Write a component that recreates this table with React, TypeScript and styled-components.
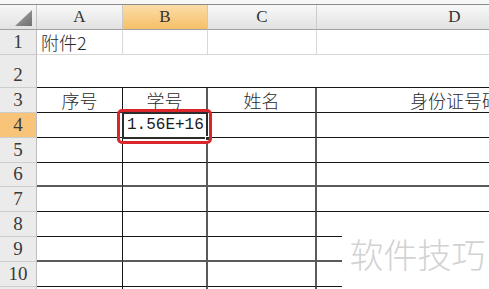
import React from 'react';
import styled, { createGlobalStyle, css } from 'styled-components';

type Line = 'none' | 'light' | 'dark' | 'heavy';

const lineCss = (l: Line) => {
  if (l === 'light') return '1px solid #d8d8d8';
  if (l === 'dark') return '1px solid #161616';
  if (l === 'heavy') return '2px solid #5a5a5a';
  return 'none';
};

const COLS = '37px 86px 85px 109px 276px';

const GlobalStyle = createGlobalStyle`
  html, body {
    margin: 0;
    padding: 0;
    background: #fff;
    overflow: hidden;
  }
  * {
    box-sizing: border-box;
  }
`;

const Sheet = styled.div`
  position: relative;
  width: 489px;
  height: 289px;
  overflow: hidden;
  background: #fff;
`;

const TopStrip = styled.div`
  height: 5px;
  background: #f7f7f7;
  border-bottom: 1px solid #8a8a8a;
`;

const Row = styled.div<{ $h: number }>`
  display: grid;
  grid-template-columns: ${COLS};
  height: ${p => p.$h}px;
`;

const Corner = styled.div`
  background: linear-gradient(#f6f6f6, #e3e3e3);
  border-right: 1px solid #c4c4c4;
  border-bottom: 1px solid #a0a0a0;
  display: flex;
  align-items: flex-end;
  justify-content: flex-end;
  padding: 0 4px 3px 0;
`;

const ColHead = styled.div<{ $active?: boolean }>`
  display: flex;
  align-items: center;
  justify-content: center;
  font-family: 'Liberation Serif', serif;
  font-size: 17px;
  color: #333;
  border-right: 1px solid #cacaca;
  border-bottom: 1px solid #a0a0a0;
  background: ${p =>
    p.$active
      ? 'linear-gradient(#fbdca6, #f6c068)'
      : 'linear-gradient(#f8f8f8, #e2e2e2)'};
`;

const RowHead = styled.div<{ $active?: boolean }>`
  display: flex;
  align-items: flex-end;
  justify-content: center;
  padding-bottom: 1px;
  font-family: 'Liberation Serif', serif;
  font-size: 19px;
  line-height: 22px;
  color: #3a3a3a;
  border-right: 1px solid #bdbdbd;
  border-bottom: 1px solid #cdcdcd;
  background: ${p => (p.$active ? '#f8c47a' : '#ebebeb')};
`;

const Cell = styled.div<{
  $right?: Line;
  $bottom?: Line;
  $align?: 'left' | 'center';
  $span?: number;
}>`
  display: flex;
  align-items: center;
  justify-content: ${p => (p.$align === 'left' ? 'flex-start' : 'center')};
  padding: 0 4px;
  white-space: nowrap;
  overflow: hidden;
  font-family: 'Noto Sans CJK SC', sans-serif;
  font-weight: 300;
  font-size: 18px;
  color: #2a2a2a;
  border-right: ${p => lineCss(p.$right || 'none')};
  border-bottom: ${p => lineCss(p.$bottom || 'none')};
  ${p =>
    p.$span &&
    css`
      grid-column: span ${p.$span};
    `}
`;

const Number = styled.span`
  font-family: 'Liberation Mono', monospace;
  font-size: 16px;
  font-weight: 400;
  color: #1a1a1a;
`;

const Highlight = styled.div`
  position: absolute;
  left: 117px;
  top: 109px;
  width: 95px;
  height: 35px;
  border: 3px solid #d8262b;
  border-radius: 5px;
`;

const ActiveCell = styled.div`
  position: absolute;
  left: 122px;
  top: 112px;
  width: 86px;
  height: 27px;
  border: 2px solid #2b2b2b;
`;

const FillHandle = styled.div`
  position: absolute;
  right: -4px;
  bottom: -4px;
  width: 5px;
  height: 5px;
  background: #2b2b2b;
  border: 1px solid #fff;
`;

const Watermark = styled.div`
  position: absolute;
  left: 342px;
  top: 223px;
  right: 0;
  bottom: 0;
  background: #fff;
  display: flex;
  align-items: center;
  justify-content: center;
  padding: 0 0 6px 4px;
  font-family: 'Noto Sans CJK SC', sans-serif;
  font-weight: 300;
  font-size: 34px;
  color: #d2d2d2;
`;

// rows 5..10, then a sliver of row 11 at the bottom edge
const rowHeights = [25, 24, 25, 25, 25, 25];
const heavyBottoms = [6, 9];

const App: React.FC = () => {
  return (
    <>
      <GlobalStyle />
      <Sheet>
        <TopStrip />
        <Row $h={25}>
          <Corner>
            <svg width="17" height="16" viewBox="0 0 17 16">
              <defs>
                <linearGradient id="tri" x1="0" y1="0" x2="1" y2="1">
                  <stop offset="0" stopColor="#a9a9a9" />
                  <stop offset="1" stopColor="#6f6f6f" />
                </linearGradient>
              </defs>
              <polygon points="17,0 17,16 0,16" fill="url(#tri)" />
            </svg>
          </Corner>
          <ColHead>A</ColHead>
          <ColHead $active>B</ColHead>
          <ColHead>C</ColHead>
          <ColHead>D</ColHead>
        </Row>

        <Row $h={25}>
          <RowHead>1</RowHead>
          <Cell $align="left" $right="light" $bottom="light">
            附件2
          </Cell>
          <Cell $right="light" $bottom="light" />
          <Cell $right="light" $bottom="light" />
          <Cell $bottom="light" />
        </Row>

        <Row $h={33}>
          <RowHead>2</RowHead>
          <Cell $span={4} $bottom="dark" />
        </Row>

        <Row $h={25}>
          <RowHead>3</RowHead>
          <Cell $right="dark" $bottom="dark">序号</Cell>
          <Cell $right="heavy" $bottom="dark">学号</Cell>
          <Cell $right="heavy" $bottom="dark">姓名</Cell>
          <Cell $bottom="dark">身份证号码</Cell>
        </Row>

        <Row $h={25}>
          <RowHead $active>4</RowHead>
          <Cell $right="dark" $bottom="dark" />
          <Cell $align="left" $right="heavy" $bottom="dark">
            <Number>1.56E+16</Number>
          </Cell>
          <Cell $right="heavy" $bottom="dark" />
          <Cell $bottom="dark" />
        </Row>

        {rowHeights.map((h, i) => {
          const n = i + 5;
          const bottom: Line = heavyBottoms.includes(n) ? 'heavy' : 'dark';
          return (
            <Row key={n} $h={h}>
              <RowHead>{n}</RowHead>
              <Cell $right="dark" $bottom={bottom} />
              <Cell $right="heavy" $bottom={bottom} />
              <Cell $right="heavy" $bottom={bottom} />
              <Cell $bottom={bottom} />
            </Row>
          );
        })}

        <Row $h={25}>
          <RowHead />
          <Cell $right="dark" />
          <Cell $right="heavy" />
          <Cell $right="heavy" />
          <Cell />
        </Row>

        <ActiveCell>
          <FillHandle />
        </ActiveCell>
        <Highlight />
        <Watermark>软件技巧</Watermark>
      </Sheet>
    </>
  );
};

export default App;
